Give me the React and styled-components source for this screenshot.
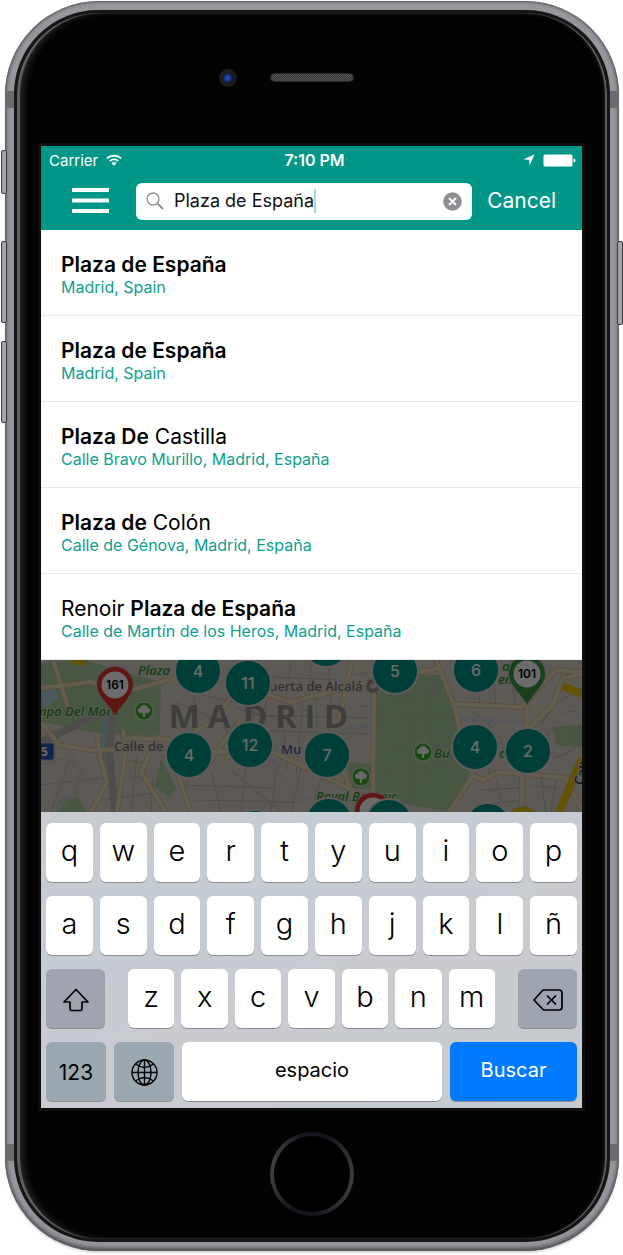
import React, { useState } from "react";
import styled, { createGlobalStyle, css } from "styled-components";

const TEAL = "#009788";

const GlobalStyle = createGlobalStyle`
  *, *::before, *::after { box-sizing: border-box; }
  body {
    margin: 0;
    background: #fff;
    color: #000;
    font-family: Inter, "Liberation Sans", sans-serif;
  }
  button, input { font: inherit; color: inherit; }
  button { border: 0; padding: 0; background: none; cursor: pointer; }
`;

/* ---------- device ---------- */

const Page = styled.div`
  padding: 1px 4px 4px 5px;
  overflow: hidden;
`;

const Frame = styled.div`
  position: relative;
  isolation: isolate;
  padding: 9px;
  border-radius: 94px;
  background: #96969d;
  box-shadow: inset 0 0 3px 1px #55565a, inset 0 -3px 4px #55565a,
    0 2px 2px #d8d8d8;
`;

const SideButton = styled.span`
  position: absolute;
  z-index: -1;
  top: ${(p) => p.$top}px;
  ${(p) => p.$side}: -4px;
  width: 6px;
  height: ${(p) => p.$length}px;
  border-radius: 2px;
  border: 1px solid #3c3d42;
  background: #a3a4aa;
`;

const Antenna = styled.span`
  position: absolute;
  ${(p) => p.$edge}: 90px;
  ${(p) => p.$side}: 0;
  width: 9px;
  height: 17px;
  background: #6b6c72;
`;

const Glass = styled.div`
  position: relative;
  padding: 0 25px 0 24px;
  border: 3px solid #151716;
  border-radius: 84px;
  background: #030303;
  box-shadow: inset 3px 0 1px #626262, inset -2px 0 1px #626262,
    inset 8px 0 8px -3px #333, inset -4px 0 5px -2px #222;
`;

const TopBezel = styled.div`
  display: grid;
  grid-template-columns: 1fr auto 1fr;
  align-items: center;
  height: 133px;
  padding-bottom: 4px;
`;

const Camera = styled.span`
  justify-self: end;
  width: 18px;
  height: 18px;
  margin-right: 33px;
  border-radius: 50%;
  border: 4px solid #1d1d1f;
  background: radial-gradient(circle at 45% 50%, #2f5fd0 0, #173690 35%, #0a1230 75%);
`;

const Speaker = styled.span`
  width: 84px;
  height: 9px;
  border-radius: 5px;
  border: 1px solid #29292a;
  background: repeating-conic-gradient(#545454 0 25%, #383838 0 50%) 0 0 / 2px 2px;
`;

const BottomBezel = styled.div`
  display: flex;
  align-items: center;
  justify-content: center;
  height: 131px;
`;

const HomeButton = styled.button`
  width: 84px;
  height: 84px;
  border-radius: 50%;
  border: 4px solid transparent;
  background: linear-gradient(#000, #000) padding-box,
    linear-gradient(100deg, #4a4b51, #14151a 35%, #15161b 60%, #44454c) border-box;
`;

const Screen = styled.main`
  background: #fff;
  box-shadow: 0 0 0 3px #0e0e0e;
`;

/* ---------- header ---------- */

const Header = styled.header`
  background: ${TEAL};
  color: #fff;
`;

const StatusBar = styled.div`
  display: grid;
  grid-template-columns: 1fr auto 1fr;
  align-items: center;
  height: 28px;
  padding: 0 6px 0 8px;
  font-size: 15px;
`;

const StatusGroup = styled.div`
  display: flex;
  align-items: center;
  justify-content: ${(p) => p.$align};
  gap: 8px;
`;

const Clock = styled.time`
  padding-left: 4px;
  font-size: 16px;
  font-weight: 600;
`;

const NavBar = styled.form`
  display: flex;
  align-items: center;
  height: 56px;
  padding: 0 26px 2px 31px;
`;

const MenuButton = styled.button`
  display: flex;
  margin-right: 27px;
`;

const SearchBox = styled.div`
  flex: 1;
  min-width: 0;
  display: flex;
  align-items: center;
  height: 37px;
  padding: 0 10px;
  border-radius: 6px;
  background: #fff;
  color: #111;
`;

const SearchInput = styled.input`
  field-sizing: content;
  min-width: 0;
  max-width: 100%;
  margin-left: 10px;
  padding: 0;
  border: 0;
  outline: 0;
  background: none;
  font-size: 18px;
  line-height: 24px;
`;

const Caret = styled.span`
  flex: none;
  width: 2px;
  height: 24px;
  background: #a5dbd5;
`;

const ClearButton = styled.button`
  display: flex;
  margin-left: auto;
`;

const CancelButton = styled.button`
  margin-left: 15px;
  font-size: 21px;
  line-height: 28px;
`;

/* ---------- results ---------- */

const Results = styled.ul`
  list-style: none;
  margin: 0;
  padding: 0;
`;

const Result = styled.li`
  height: 86px;
  border-bottom: 1px solid #e8e8e8;
`;

const ResultLink = styled.a`
  display: block;
  padding: 21px 20px 0;
  color: inherit;
  text-decoration: none;
`;

const ResultTitle = styled.span`
  display: block;
  font-size: 21px;
  line-height: 28px;

  b { font-weight: 600; }
`;

const ResultPlace = styled.span`
  display: block;
  color: #0f9f90;
  font-size: 16px;
  line-height: 17px;
`;

/* ---------- map ---------- */

const MapArea = styled.section`
  position: relative;
  height: 152px;
  overflow: hidden;
  background: #e6ddd3;

  &::after {
    content: "";
    position: absolute;
    inset: 0;
    background: rgba(0, 0, 0, 0.58);
    pointer-events: none;
  }
`;

const MapDrawing = styled.svg`
  display: block;
  width: 100%;
  height: 100%;
`;

const Cluster = styled.button`
  position: absolute;
  left: ${(p) => p.$x}px;
  top: ${(p) => p.$y}px;
  width: 48px;
  height: 48px;
  margin: -24px 0 0 -24px;
  border-radius: 50%;
  border: 2px solid #dcdcdc;
  background: ${TEAL};
  color: #fff;
  font-size: 16px;
  font-weight: 500;
`;

const Pin = styled.button`
  position: absolute;
  left: ${(p) => p.$x}px;
  top: ${(p) => p.$y}px;
  margin: -20px 0 0 -20px;
  width: 40px;
  height: 54px;

  svg { position: absolute; inset: 0; }
`;

const PinCount = styled.span`
  position: absolute;
  z-index: 1;
  inset: 0 0 auto;
  line-height: 40px;
  font-size: 12px;
  font-weight: 600;
  color: #000;
`;

/* ---------- keyboard ---------- */

const Keyboard = styled.section`
  display: flex;
  flex-direction: column;
  gap: 14px;
  padding: 11px 5px 7px;
  background: linear-gradient(160deg, #c8cbd0, #c5ccd4 30%, #cacbd0 60%, #c3cbd0);
`;

const KeyRow = styled.div`
  display: flex;
  gap: ${(p) => p.$gap}px;
`;

const Letters = styled(KeyRow)`
  flex: 1;
`;

const Key = styled.button`
  flex: 1 1 0;
  min-width: 0;
  height: 59px;
  display: flex;
  align-items: center;
  justify-content: center;
  padding-bottom: 4px;
  border-radius: 6px;
  background: #fff;
  box-shadow: 0 1px 0 #8b8e92;
  color: #000;
  font-size: 29px;
  font-weight: 300;
  line-height: 36px;
`;

const WordKey = styled(Key)`
  font-size: 20px;
  font-weight: 400;
  ${(p) =>
    p.$primary &&
    css`
      flex: 0 0 127px;
      background: #007aff;
      color: #fff;
    `}
`;

const FunctionKey = styled(Key)`
  flex: 0 0 ${(p) => p.$width}px;
  padding: 2px 0 0;
  background: ${(p) => p.$tone};
  font-size: 21px;
  font-weight: 400;
`;

/* ---------- icons ---------- */

const WifiIcon = () => (
  <svg width="16" height="12" viewBox="0 0 16 12" fill="none" stroke="#fff" strokeWidth="1.8">
    <path d="M1 4.400a10 10 0 0 1 14 0" />
    <path d="M3.700 7.100a6.200 6.200 0 0 1 8.600 0" />
    <path d="M8 11.800 5.400 9.100a3.800 3.800 0 0 1 5.200 0z" fill="#fff" stroke="none" />
  </svg>
);

const LocationIcon = () => (
  <svg width="12" height="12" viewBox="0 0 12 12" fill="#fff">
    <path d="M11.500.5 6.600 11.500 6.200 6 .5 5.300z" />
  </svg>
);

const BatteryIcon = () => (
  <svg width="33" height="13" viewBox="0 0 33 13" fill="#fff">
    <rect x="0.5" y="0.5" width="29" height="12" rx="1.5" />
    <path d="M30.500 4.500c1.400.3 2 1 2 2s-.6 1.700-2 2z" />
  </svg>
);

const MenuIcon = () => (
  <svg width="37" height="26" viewBox="0 0 37 26" fill="#fff">
    <path d="M0 0h37v4H0zM0 10.500h37v4H0zM0 21h37v4H0z" />
  </svg>
);

const SearchIcon = () => (
  <svg width="18" height="18" viewBox="0 0 18 18" fill="none" stroke="#8e8e93" strokeWidth="1.3">
    <circle cx="7" cy="7" r="6" />
    <path d="m11.300 11.300 5.700 5.700" strokeWidth="1.9" />
  </svg>
);

const ClearIcon = () => (
  <svg width="19" height="19" viewBox="0 0 19 19">
    <circle cx="9.5" cy="9.5" r="9.3" fill="#8e8e93" />
    <path d="m6 6 7 7m0-7-7 7" stroke="#fff" strokeWidth="1.9" />
  </svg>
);

const ShiftIcon = () => (
  <svg width="28" height="24" viewBox="0 0 28 24" fill="none" stroke="#000" strokeWidth="1.7" strokeLinejoin="round">
    <path d="M14 1.500 26 14h-6v7q0 1.500-1.500 1.500h-9Q8 22.500 8 21v-7H2z" />
  </svg>
);

const DeleteIcon = () => (
  <svg width="30" height="22" viewBox="0 0 30 22" fill="none" stroke="#000" strokeWidth="1.7" strokeLinejoin="round">
    <path d="M10 1h16q3 0 3 3v14q0 3-3 3H10.500L1 11z" />
    <path d="m14 6.500 9 9m0-9-9 9" />
  </svg>
);

const GlobeIcon = () => (
  <svg width="27" height="27" viewBox="0 0 27 27" fill="none" stroke="#000" strokeWidth="1.4">
    <circle cx="13.5" cy="13.5" r="12.5" />
    <ellipse cx="13.5" cy="13.5" rx="6.5" ry="12.5" />
    <path d="M13.500 1v25M1 13.500h25M4.500 5q9 7 18 0M4.500 22q9-7 18 0" />
  </svg>
);

const PinShape = ({ color }) => (
  <svg width="40" height="54" viewBox="0 0 40 54">
    <path
      d="M20 1.500C9.500 1.500 1.500 9.500 1.500 20 1.500 30 12 38 20 51c8-13 18.500-21 18.500-31 0-10.500-8-18.500-18.500-18.500z"
      fill={color}
      stroke="#c8c8c8"
    />
    <circle cx="20" cy="20" r="13.5" fill="#fff" />
  </svg>
);

const Tree = ({ x, y }) => (
  <g transform={`translate(${x} ${y})`}>
    <circle r="9" fill="#3fae2e" stroke="#d9efcf" />
    <path
      d="M-1 6v-4q-5 .5-5-3 0-2 2-2.500Q-3-6 0-6t4 2.500q2 .5 2 2.500 0 3.500-5 3v4z"
      fill="#f4fbf0"
    />
  </g>
);

const ROADS = [
  "M0 62 18 85 50 90 118 88 190 92",
  "M0 28 50 22 90 30 135 18 180 5",
  "M12 0 28 50",
  "M56 75 60 100 66 122 50 152",
  "M82 70 85 90 76 152",
  "M118 75 100 112 125 152",
  "M82 78 140 80 170 62 205 20 216 0",
  "M135 110 150 152",
  "M120 92 165 108 180 85 200 60",
  "M205 28 250 42 330 22 400 8",
  "M311 0 298 60",
  "M333 32 332 140",
  "M180 98 232 92 280 115 330 140",
  "M300 100 312 140",
  "M395 0 414 48 420 75 432 115 408 152",
  "M410 44 480 47 515 10 541 12",
  "M486 40 486 70 512 45 522 18 541 14",
  "M431 115 442 120 458 112 528 118",
  "M481 112 481 152",
  "M525 120 541 150",
];

const STREETS =
  "M0 105 35 95M0 125 60 118M10 152 28 100M30 152 42 105M60 140 120 132M66 120 110 116M85 100 110 104M90 152 96 96M110 152 112 118M140 30 200 44M130 40 175 60M150 20 160 85M180 45 190 90M195 48 240 60M210 30 215 92M225 42 222 110M240 38 246 110M262 40 255 115M275 36 278 112M290 34 285 110M200 70 330 74M205 55 330 58M190 110 240 152M205 105 200 152M170 112 180 152M140 125 235 128M150 140 260 142M235 110 230 152M260 108 250 152M280 118 270 152M190 15 300 20M250 0 245 35M270 0 268 36M290 0 286 30M312 15 335 12M315 45 332 47M340 60 410 58M345 90 420 84M365 20 372 140M392 20 385 120M342 110 420 104M420 20 500 22M432 0 440 48M450 0 455 46M470 0 474 46M420 60 480 62M430 50 452 68M445 80 505 95M450 75 448 115M500 65Q520 30 541 35M505 75Q520 60 532 75T512 98M520 55q12-8 18 0M440 130 478 128M445 145 478 140M455 120 462 152M490 125 530 130M500 118 505 152M515 120 510 152M400 30 340 45";

const MapPicture = () => (
  <MapDrawing viewBox="0 0 541 152" preserveAspectRatio="xMidYMid slice" role="img" aria-label="Madrid">
    <rect width="541" height="152" fill="#ded6ce" />
    <path d="M0 4 42 0 120 22 119 76 62 74 0 62z" fill="#a9cf9b" />
    <path d="M120 98 135 128 128 138 114 126zM18 140 38 138 45 152H15z" fill="#a9cf9b" />
    <path d="M335 32 365 15 400 15 412 46 428 115 408 152 335 138z" fill="#a9cf9b" />
    <path d="M305 102 330 104 330 130 312 128zM512 67 541 65V87L515 85z" fill="#a9cf9b" />
    <path d="M0 25q10-4 15 6T2 47z" fill="#b2d6e6" />
    <path d="M68 52 62 85 66 105" stroke="#a5cfe0" strokeWidth="6" fill="none" />
    <path d="M0 82 55 55 78 45M74 40 68 90 74 152" stroke="#bdb8b1" strokeWidth="8" fill="none" />
    <path d={STREETS} stroke="#bfb9b4" strokeWidth="1.2" fill="none" />
    <path d="M26 92 42 118 15 150M50 20 72 40M190 90 232 100 250 130 290 150M300 70 332 64M415 58 486 62" stroke="#d0d0d6" strokeWidth="4" fill="none" />
    {ROADS.map((d) => (
      <path key={`edge-${d}`} d={d} stroke="#dfb07c" strokeWidth="5.500" fill="none" strokeLinejoin="round" />
    ))}
    {ROADS.map((d) => (
      <path key={`fill-${d}`} d={d} stroke="#e9e0b8" strokeWidth="4" fill="none" strokeLinejoin="round" />
    ))}
    <path d="M522 26 541 34M518 152 541 98M30 0 45 2" stroke="#eec40c" strokeWidth="8" fill="none" />
    <g fontFamily="Open Sans, sans-serif">
      <g fill="#979490" fontSize="33" fontWeight="700" textAnchor="middle">
        <text x="143" y="68">M</text>
        <text x="178" y="68">A</text>
        <text x="214" y="68">D</text>
        <text x="245" y="68">R</text>
        <text x="269" y="68">I</text>
        <text x="295" y="68">D</text>
      </g>
      <g fill="#3a8f2c" stroke="#cfe0c6" strokeWidth="2" paintOrder="stroke" fontStyle="italic" fontWeight="600" fontSize="13">
        <text x="97" y="15">Plaza</text>
        <text x="-6" y="56">mpo Del Moro</text>
        <text x="275" y="141">Royal Botanic</text>
        <text x="393" y="98">Bu</text>
        <text x="458" y="98">c</text>
        <text x="461" y="11">a</text>
        <text x="457" y="24">en</text>
      </g>
      <g fill="#77736f" stroke="#ded6ce" strokeWidth="2" paintOrder="stroke" fontSize="13" fontWeight="600">
        <text x="73" y="91">Calle de</text>
        <text x="228" y="31">uerta de Alcalá</text>
        <text x="240" y="94" fill="#4a5bb0">Mu</text>
        <text x="305" y="93" fill="#4a5bb0">)</text>
        <text transform="translate(541 126) rotate(-70)" fill="#444">Calle</text>
      </g>
      <circle cx="332" cy="26" r="5" fill="none" stroke="#979490" strokeWidth="4" />
      <Tree x={103} y={51} />
      <Tree x={320} y={117} />
      <Tree x={382} y={92} />
      <rect x="-6" y="83" width="19" height="17" rx="2" fill="#2858b8" stroke="#9db4e0" />
      <text x="0" y="96" fontSize="12" fontWeight="700" fill="#fff">5</text>
    </g>
  </MapDrawing>
);

/* ---------- data ---------- */

const RESULTS = [
  { title: <b>Plaza de España</b>, place: "Madrid, Spain" },
  { title: <b>Plaza de España</b>, place: "Madrid, Spain" },
  { title: <><b>Plaza De</b> Castilla</>, place: "Calle Bravo Murillo, Madrid, España" },
  { title: <><b>Plaza de</b> Colón</>, place: "Calle de Génova, Madrid, España" },
  { title: <>Renoir <b>Plaza de España</b></>, place: "Calle de Martín de los Heros, Madrid, España" },
];

const CLUSTERS = [
  { x: 157, y: 11, n: 4 },
  { x: 207, y: 23, n: 11 },
  { x: 285, y: -16 },
  { x: 354, y: 11, n: 5 },
  { x: 435, y: 10, n: 6 },
  { x: 148, y: 95, n: 4 },
  { x: 209, y: 85, n: 12 },
  { x: 286, y: 95, n: 7 },
  { x: 434, y: 87, n: 4 },
  { x: 487, y: 91, n: 2 },
  { x: 214, y: 173 },
  { x: 288, y: 161 },
  { x: 348, y: 162 },
  { x: 447, y: 166 },
];

const PINS = [
  { x: 74, y: 25, n: 161, color: "#e5372c" },
  { x: 486, y: 14, n: 101, color: "#3a9a3c" },
  { x: 332, y: 151, color: "#e5372c" },
  { x: 482, y: 165, color: "#e6c60d" },
];

export default function App() {
  const [query, setQuery] = useState("Plaza de España");

  return (
    <Page>
      <GlobalStyle />
      <Frame>
        <SideButton $side="left" $top={149} $length={44} />
        <SideButton $side="left" $top={240} $length={82} />
        <SideButton $side="left" $top={340} $length={82} />
        <SideButton $side="right" $top={240} $length={84} />
        <Antenna $side="left" $edge="top" />
        <Antenna $side="right" $edge="top" />
        <Antenna $side="left" $edge="bottom" />
        <Antenna $side="right" $edge="bottom" />
        <Glass>
          <TopBezel>
            <Camera />
            <Speaker />
          </TopBezel>
          <Screen>
            <Header>
              <StatusBar>
                <StatusGroup $align="flex-start">
                  Carrier
                  <WifiIcon />
                </StatusGroup>
                <Clock>7:10 PM</Clock>
                <StatusGroup $align="flex-end">
                  <LocationIcon />
                  <BatteryIcon />
                </StatusGroup>
              </StatusBar>
              <NavBar onSubmit={(e) => e.preventDefault()}>
                <MenuButton type="button" aria-label="Menu">
                  <MenuIcon />
                </MenuButton>
                <SearchBox>
                  <SearchIcon />
                  <SearchInput
                    aria-label="Search"
                    value={query}
                    onChange={(e) => setQuery(e.target.value)}
                  />
                  <Caret />
                  <ClearButton type="button" aria-label="Clear" onClick={() => setQuery("")}>
                    <ClearIcon />
                  </ClearButton>
                </SearchBox>
                <CancelButton type="button">Cancel</CancelButton>
              </NavBar>
            </Header>
            <Results>
              {RESULTS.map((r, i) => (
                <Result key={i}>
                  <ResultLink href="#">
                    <ResultTitle>{r.title}</ResultTitle>
                    <ResultPlace>{r.place}</ResultPlace>
                  </ResultLink>
                </Result>
              ))}
            </Results>
            <MapArea>
              <MapPicture />
              {PINS.map((p) => (
                <Pin key={`${p.x}-${p.y}`} $x={p.x} $y={p.y} aria-label="Station">
                  <PinShape color={p.color} />
                  <PinCount>{p.n}</PinCount>
                </Pin>
              ))}
              {CLUSTERS.map((c) => (
                <Cluster key={`${c.x}-${c.y}`} $x={c.x} $y={c.y} aria-label="Stations">
                  {c.n}
                </Cluster>
              ))}
            </MapArea>
            <Keyboard>
              {["qwertyuiop", "asdfghjklñ"].map((row) => (
                <KeyRow key={row} $gap={7}>
                  {[...row].map((k) => (
                    <Key key={k}>{k}</Key>
                  ))}
                </KeyRow>
              ))}
              <KeyRow $gap={23}>
                <FunctionKey $width={59} $tone="#a0a4b0" aria-label="Shift">
                  <ShiftIcon />
                </FunctionKey>
                <Letters $gap={7}>
                  {[..."zxcvbnm"].map((k) => (
                    <Key key={k}>{k}</Key>
                  ))}
                </Letters>
                <FunctionKey $width={59} $tone="#9fa5b0" aria-label="Delete">
                  <DeleteIcon />
                </FunctionKey>
              </KeyRow>
              <KeyRow $gap={8}>
                <FunctionKey $width={60} $tone="#99a8b1">123</FunctionKey>
                <FunctionKey $width={60} $tone="#99a8b1" aria-label="Next keyboard">
                  <GlobeIcon />
                </FunctionKey>
                <WordKey>espacio</WordKey>
                <WordKey $primary>Buscar</WordKey>
              </KeyRow>
            </Keyboard>
          </Screen>
          <BottomBezel>
            <HomeButton aria-label="Home" />
          </BottomBezel>
        </Glass>
      </Frame>
    </Page>
  );
}
